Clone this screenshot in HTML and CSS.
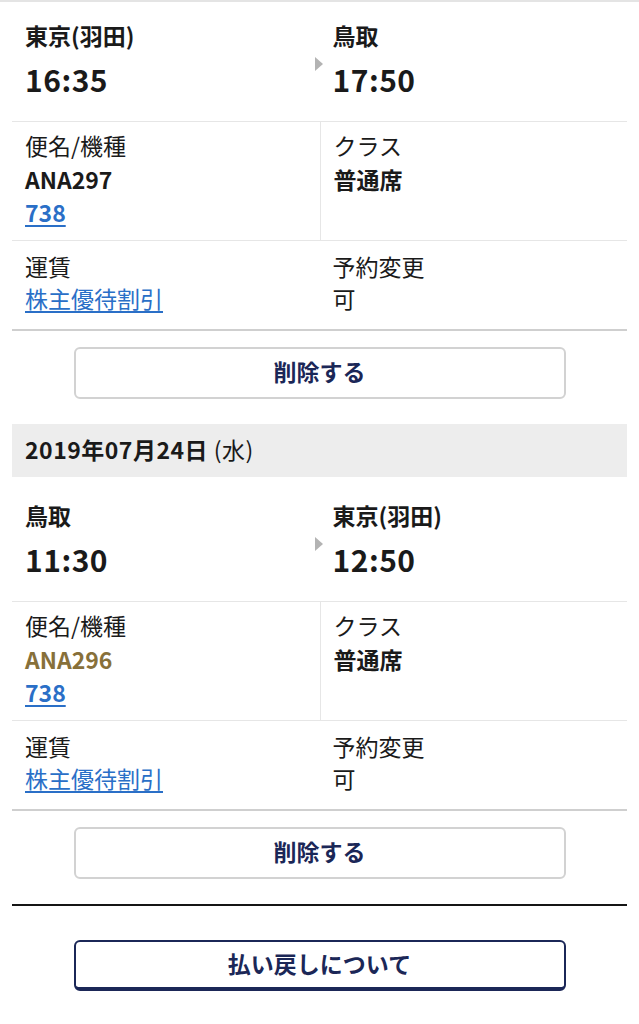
FILE: index.html
```html
<!DOCTYPE html>
<html lang="ja">
<head>
    <meta charset="UTF-8">
    <meta name="viewport" content="width=device-width, initial-scale=1.0">
    <title>予約内容の確認</title>
    <link rel="stylesheet" href="styles.css">
</head>
<body>
    <div class="page">
        <!-- 往路 -->
        <section class="segment segment-first">
            <div class="route">
                <div class="stop">
                    <div class="airport">東京(羽田)</div>
                    <div class="time">16:35</div>
                </div>
                <div class="stop stop-arrive">
                    <span class="arrow"></span>
                    <div class="airport">鳥取</div>
                    <div class="time">17:50</div>
                </div>
            </div>
            <div class="info">
                <div class="cell">
                    <div class="label">便名/機種</div>
                    <div class="value">ANA297</div>
                    <a class="link value" href="#">738</a>
                </div>
                <div class="cell cell-right">
                    <div class="label">クラス</div>
                    <div class="value">普通席</div>
                </div>
            </div>
            <div class="info info-fare">
                <div class="cell">
                    <div class="label">運賃</div>
                    <a class="link" href="#">株主優待割引</a>
                </div>
                <div class="cell">
                    <div class="label">予約変更</div>
                    <div class="plain">可</div>
                </div>
            </div>
            <div class="actions">
                <button class="btn">削除する</button>
            </div>
        </section>

        <div class="date-bar"><strong>2019年07月24日</strong> (水)</div>

        <!-- 復路 -->
        <section class="segment">
            <div class="route">
                <div class="stop">
                    <div class="airport">鳥取</div>
                    <div class="time">11:30</div>
                </div>
                <div class="stop stop-arrive">
                    <span class="arrow"></span>
                    <div class="airport">東京(羽田)</div>
                    <div class="time">12:50</div>
                </div>
            </div>
            <div class="info">
                <div class="cell">
                    <div class="label">便名/機種</div>
                    <div class="value value-gold">ANA296</div>
                    <a class="link value" href="#">738</a>
                </div>
                <div class="cell cell-right">
                    <div class="label">クラス</div>
                    <div class="value">普通席</div>
                </div>
            </div>
            <div class="info info-fare">
                <div class="cell">
                    <div class="label">運賃</div>
                    <a class="link" href="#">株主優待割引</a>
                </div>
                <div class="cell">
                    <div class="label">予約変更</div>
                    <div class="plain">可</div>
                </div>
            </div>
            <div class="actions">
                <button class="btn">削除する</button>
            </div>
        </section>

        <hr class="divider">

        <div class="actions actions-last">
            <button class="btn btn-primary">払い戻しについて</button>
        </div>
    </div>
</body>
</html>
```

FILE: styles.css
```css
* {
    box-sizing: border-box;
}

body {
    margin: 0;
    background-color: #fff;
    color: #1a1a1a;
    font-family: "Noto Sans CJK JP", "Noto Sans", sans-serif;
    font-size: 23px;
    line-height: 30px;
    border-top: 2px solid #e4e4e4;
}

.page {
    padding: 0 12px;
}

/* 区間 */
.route {
    display: grid;
    grid-template-columns: 1fr 1fr;
    padding: 23px 0 22px;
    border-bottom: 1px solid #e6e6e6;
}

.segment-first .route {
    padding-top: 18px;
}

.stop {
    padding-left: 13px;
}

.stop-arrive {
    position: relative;
    padding-left: 13px;
}

.arrow {
    position: absolute;
    left: -5px;
    top: 37px;
    width: 0;
    height: 0;
    border-top: 7px solid transparent;
    border-bottom: 7px solid transparent;
    border-left: 8px solid #b3b3b3;
}

.airport {
    font-weight: bold;
}

.time {
    margin-top: 9px;
    font-size: 30px;
    line-height: 40px;
    font-weight: bold;
    letter-spacing: 0.5px;
}

/* 詳細 */
.info {
    display: grid;
    grid-template-columns: 1fr 1fr;
    border-bottom: 1px solid #e6e6e6;
}

.info .cell {
    padding: 8px 0 11px 13px;
}

.info .cell-right {
    border-left: 1px solid #e6e6e6;
}

.label {
    margin-bottom: 3px;
}

.value {
    font-weight: bold;
    line-height: 33px;
}

.info-fare {
    border-bottom: 2px solid #cfcfcf;
}

.info-fare .cell {
    padding: 10px 0 14px 13px;
}

.info-fare .label {
    margin-bottom: 1px;
}

.plain,
.info-fare .link {
    line-height: 33px;
}

.value-gold {
    color: #87703a;
}

.link {
    display: inline-block;
    color: #2a6fc7;
    text-decoration: underline;
    text-underline-offset: 3px;
}

/* ボタン */
.actions {
    display: flex;
    justify-content: center;
    padding: 16px 0 25px;
}

.btn {
    width: 80%;
    height: 52px;
    padding: 0 0 5px;
    background-color: #fff;
    border: 2px solid #d2d2d2;
    border-radius: 6px;
    color: #1b2757;
    font-family: inherit;
    font-size: 23px;
    font-weight: bold;
    cursor: pointer;
}

.btn-primary {
    height: 51px;
    padding-bottom: 4px;
    border: 2px solid #1b2757;
    border-bottom-width: 4px;
}

.actions-last {
    padding-top: 34px;
}

/* 日付 */
.date-bar {
    height: 53px;
    padding: 10px 13px 13px;
    background-color: #ededed;
    color: #1a1a1a;
    letter-spacing: 0.5px;
}

.divider {
    margin: 0;
    border: none;
    border-top: 2px solid #151515;
}
```
